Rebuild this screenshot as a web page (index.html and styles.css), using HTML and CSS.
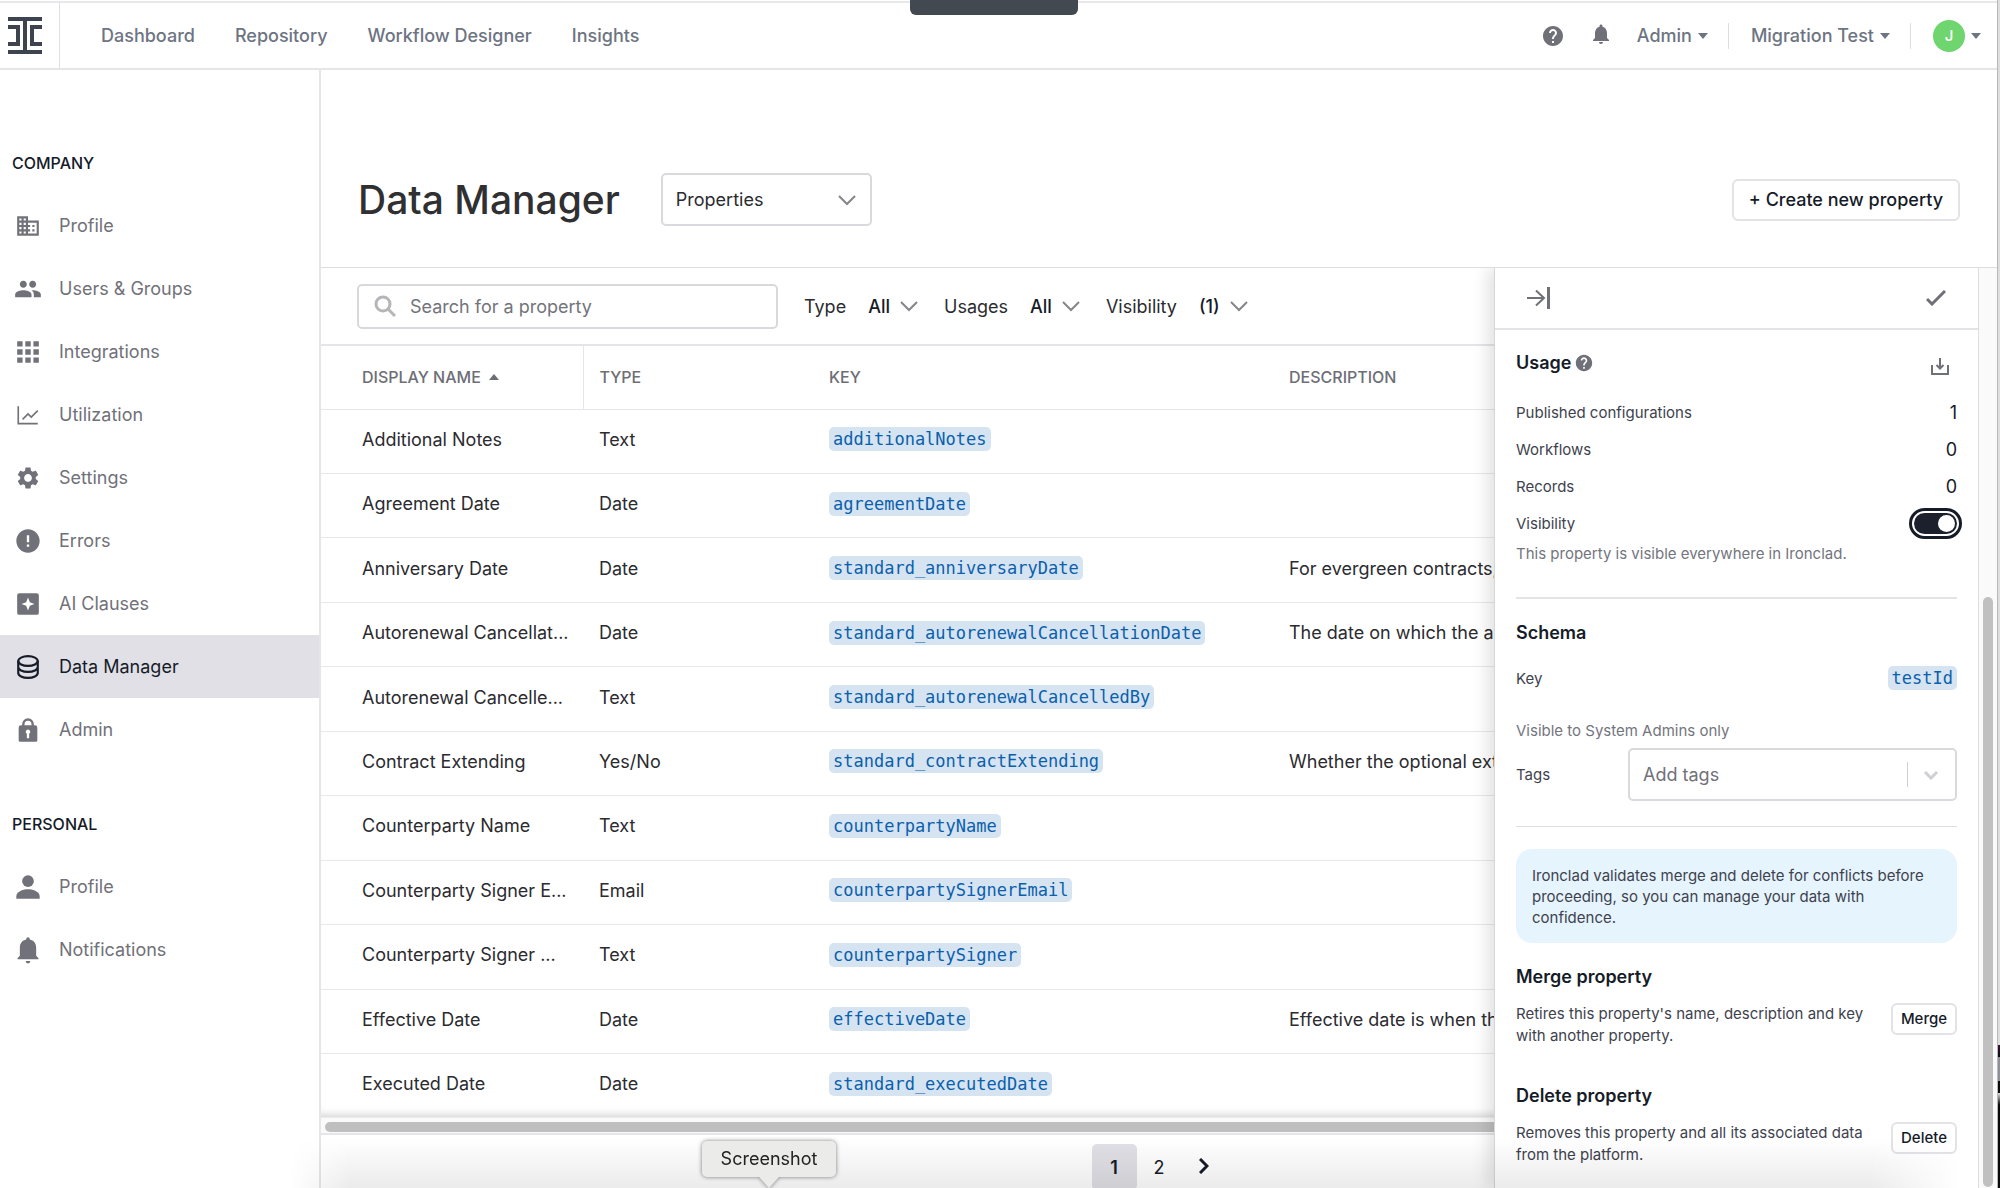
FILE: index.html
```html
<!DOCTYPE html>
<html lang="en">
  <head>
    <meta charset="UTF-8" />
    <meta name="viewport" content="width=device-width, initial-scale=1.0" />
    <title>Data Manager</title>

    <link rel="stylesheet" href="styles.css">
  </head>
  <body>
    <div class="notch"></div>

    <div class="window">
      <header class="topbar">
        <a class="logo" href="#" aria-label="Home">
          <svg width="34" height="38" viewBox="0 0 34 38" fill="#3d434f">
            <path d="M0 0h34v4H19v29h15v4H0v-4h15V4H0z" />
            <path d="M0 8h12v21H0v-4h8V12H0zM34 8H22v21h12v-4h-8V12h8z" />
          </svg>
        </a>
        <nav class="topnav">
          <a href="#">Dashboard</a>
          <a href="#">Repository</a>
          <a href="#">Workflow Designer</a>
          <a href="#">Insights</a>
        </nav>
        <div class="account">
          <button class="icon-btn" aria-label="Help">
            <svg width="24" height="24" viewBox="0 0 24 24"><path d="M12 2C6.480 2 2 6.480 2 12s4.480 10 10 10 10-4.480 10-10S17.520 2 12 2zm1 17h-2v-2h2v2zm2.070-7.750-.9.920C13.450 12.900 13 13.500 13 15h-2v-.5c0-1.100.45-2.100 1.170-2.830l1.240-1.260c.37-.36.59-.86.59-1.410 0-1.100-.9-2-2-2s-2 .9-2 2H8c0-2.210 1.790-4 4-4s4 1.790 4 4c0 .88-.36 1.680-.93 2.250z" /></svg>
          </button>
          <button class="icon-btn bell" aria-label="Notifications">
            <svg width="24" height="24" viewBox="0 0 24 24"><path d="M12 22c1.100 0 2-.9 2-2h-4c0 1.100.89 2 2 2zm6-6v-5c0-3.070-1.640-5.640-4.500-6.320V4c0-.83-.67-1.500-1.500-1.500s-1.500.67-1.500 1.500v.68C7.630 5.360 6 7.920 6 11v5l-2 2v1h16v-1l-2-2z" /></svg>
          </button>
          <button class="menu">Admin <i class="caret"></i></button>
          <button class="menu divided">Migration Test <i class="caret"></i></button>
          <button class="menu divided"><span class="avatar">J</span> <i class="caret"></i></button>
        </div>
      </header>

      <div class="body">
        <aside class="sidebar">
          <h2>Company</h2>
          <ul>
            <li><a href="#"><svg viewBox="0 0 24 24"><path d="M12 7V3H2v18h20V7H12zM6 19H4v-2h2v2zm0-4H4v-2h2v2zm0-4H4V9h2v2zm0-4H4V5h2v2zm4 12H8v-2h2v2zm0-4H8v-2h2v2zm0-4H8V9h2v2zm0-4H8V5h2v2zm10 12h-8v-2h2v-2h-2v-2h2v-2h-2V9h8v10zm-2-8h-2v2h2v-2zm0 4h-2v2h2v-2z" /></svg>Profile</a></li>
            <li><a href="#"><svg class="wide" viewBox="0 0 24 24"><path d="M16 11c1.660 0 2.990-1.340 2.990-3S17.660 5 16 5s-3 1.340-3 3 1.340 3 3 3zm-8 0c1.660 0 2.990-1.340 2.990-3S9.660 5 8 5 5 6.340 5 8s1.340 3 3 3zm0 2c-2.330 0-7 1.170-7 3.500V19h14v-2.500c0-2.330-4.670-3.500-7-3.500zm8 0c-.29 0-.62.02-.97.05 1.160.84 1.970 1.970 1.970 3.450V19h6v-2.500c0-2.330-4.670-3.500-7-3.500z" /></svg>Users &amp; Groups</a></li>
            <li><a href="#"><svg viewBox="0 0 24 24"><path d="M2 2h5v5H2zM9.500 2h5v5h-5zM17 2h5v5h-5zM2 9.500h5v5H2zM9.500 9.500h5v5h-5zM17 9.500h5v5h-5zM2 17h5v5H2zM9.500 17h5v5h-5zM17 17h5v5h-5z" /></svg>Integrations</a></li>
            <li><a href="#"><svg class="line" viewBox="0 0 24 24"><path d="M3 4v16h18M7 16l5-5 3 3 6-6" stroke-width="1.500" /></svg>Utilization</a></li>
            <li><a href="#"><svg viewBox="0 0 24 24"><path d="M19.140 12.940c.04-.3.06-.61.06-.94 0-.32-.02-.64-.07-.94l2.030-1.580c.18-.14.23-.41.12-.61l-1.920-3.320c-.12-.22-.37-.29-.59-.22l-2.390.96c-.5-.38-1.030-.7-1.620-.94l-.36-2.540c-.04-.24-.24-.41-.48-.41h-3.840c-.24 0-.43.17-.47.41l-.36 2.540c-.59.24-1.130.57-1.620.94l-2.390-.96c-.22-.08-.47 0-.59.22L2.740 8.870c-.12.21-.08.47.12.61l2.030 1.580c-.05.3-.09.63-.09.94s.02.64.07.94l-2.030 1.580c-.18.14-.23.41-.12.61l1.920 3.320c.12.22.37.29.59.22l2.390-.96c.5.38 1.030.7 1.620.94l.36 2.540c.05.24.24.41.48.41h3.840c.24 0 .44-.17.47-.41l.36-2.540c.59-.24 1.130-.56 1.620-.94l2.390.96c.22.08.47 0 .59-.22l1.920-3.320c.12-.22.07-.47-.12-.61l-2.010-1.580zM12 15.600c-1.980 0-3.600-1.620-3.600-3.600s1.620-3.600 3.600-3.600 3.600 1.620 3.600 3.600-1.620 3.600-3.600 3.600z" /></svg>Settings</a></li>
            <li><a href="#"><svg class="wide" viewBox="0 0 24 24"><path d="M12 2C6.480 2 2 6.480 2 12s4.480 10 10 10 10-4.480 10-10S17.520 2 12 2zm1 15h-2v-2h2v2zm0-4h-2V7h2v6z" /></svg>Errors</a></li>
            <li><a href="#"><svg viewBox="0 0 24 24"><path fill-rule="evenodd" d="M4 2h16a2 2 0 0 1 2 2v16a2 2 0 0 1-2 2H4a2 2 0 0 1-2-2V4a2 2 0 0 1 2-2zm8 4l-1.700 4.300L6 12l4.300 1.700L12 18l1.700-4.300L18 12l-4.300-1.700z" /></svg>AI Clauses</a></li>
            <li><a class="active" href="#"><svg class="line" viewBox="0 0 24 24"><g stroke-width="2"><ellipse cx="12" cy="6.500" rx="9" ry="4.500" /><path d="M3 6.500v11c0 2.500 4 4.500 9 4.500s9-2 9-4.500v-11M3 12c0 2.500 4 4.500 9 4.500s9-2 9-4.500" /></g></svg>Data Manager</a></li>
            <li><a href="#"><svg class="wide" viewBox="0 0 24 24"><path fill-rule="evenodd" d="M18 8h-1V7A5 5 0 0 0 7 7v1H6a2 2 0 0 0-2 2v11a1 1 0 0 0 1 1h14a1 1 0 0 0 1-1V10a2 2 0 0 0-2-2zM9 8V7a3 3 0 0 1 6 0v1zm3 3.500a2 2 0 0 1 1 3.700V19h-2v-3.800a2 2 0 0 1 1-3.700z" /></svg>Admin</a></li>
          </ul>
          <h2>Personal</h2>
          <ul>
            <li><a href="#"><svg class="wide" viewBox="0 0 24 24"><circle cx="12" cy="7" r="5" /><path d="M2 22v-2c0-3.700 5-6 10-6s10 2.300 10 6v2z" /></svg>Profile</a></li>
            <li><a href="#"><svg class="wide" viewBox="0 0 24 24"><path d="M12 23.500a2 2 0 0 0 2-2h-4a2 2 0 0 0 2 2zM19 17v-7c0-3.500-2-6.300-5.500-7V2.500a1.500 1.500 0 0 0-3 0V3C7 3.700 5 6.500 5 10v7l-2 2v1h18v-1z" /></svg>Notifications</a></li>
          </ul>
        </aside>

        <main class="main">
          <div class="page-head">
            <h1>Data Manager</h1>
            <div class="select view-select">
              <select aria-label="View">
                <option>Properties</option>
              </select>
              <svg width="18" height="12" viewBox="0 0 18 12"><path d="M1 2l8 8 8-8" /></svg>
            </div>
            <button class="btn create">+ Create new property</button>
          </div>

          <div class="workspace">
            <div class="filters">
              <div class="search">
                <svg width="22" height="22" viewBox="0 0 22 22"><circle cx="9" cy="9" r="7" /><path d="M14 14l7 7" /></svg>
                <input type="text" placeholder="Search for a property" aria-label="Search for a property" />
              </div>
              <div class="filter"><span>Type</span><button>All <svg width="18" height="12" viewBox="0 0 18 12"><path d="M1 2l8 8 8-8" /></svg></button></div>
              <div class="filter"><span>Usages</span><button>All <svg width="18" height="12" viewBox="0 0 18 12"><path d="M1 2l8 8 8-8" /></svg></button></div>
              <div class="filter"><span>Visibility</span><button>(1) <svg width="18" height="12" viewBox="0 0 18 12"><path d="M1 2l8 8 8-8" /></svg></button></div>
            </div>

            <div class="table-wrap">
              <table>
                <colgroup>
                  <col class="col-name" />
                  <col class="col-type" />
                  <col class="col-key" />
                  <col />
                </colgroup>
                <thead>
                  <tr><th>Display name <i class="caret up"></i></th><th>Type</th><th>Key</th><th>Description</th></tr>
                </thead>
                <tbody>
                  <tr><td>Additional Notes</td><td>Text</td><td><code>additionalNotes</code></td><td></td></tr>
                  <tr><td>Agreement Date</td><td>Date</td><td><code>agreementDate</code></td><td></td></tr>
                  <tr><td>Anniversary Date</td><td>Date</td><td><code>standard_anniversaryDate</code></td><td>For evergreen contracts,</td></tr>
                  <tr><td>Autorenewal Cancellat...</td><td>Date</td><td><code>standard_autorenewalCancellationDate</code></td><td>The date on which the au</td></tr>
                  <tr><td>Autorenewal Cancelle...</td><td>Text</td><td><code>standard_autorenewalCancelledBy</code></td><td></td></tr>
                  <tr><td>Contract Extending</td><td>Yes/No</td><td><code>standard_contractExtending</code></td><td>Whether the optional ext</td></tr>
                  <tr><td>Counterparty Name</td><td>Text</td><td><code>counterpartyName</code></td><td></td></tr>
                  <tr><td>Counterparty Signer E...</td><td>Email</td><td><code>counterpartySignerEmail</code></td><td></td></tr>
                  <tr><td>Counterparty Signer ...</td><td>Text</td><td><code>counterpartySigner</code></td><td></td></tr>
                  <tr><td>Effective Date</td><td>Date</td><td><code>effectiveDate</code></td><td>Effective date is when th</td></tr>
                  <tr><td>Executed Date</td><td>Date</td><td><code>standard_executedDate</code></td><td></td></tr>
                </tbody>
              </table>
            </div>
            <div class="hscroll"><div class="hscroll-thumb"></div></div>

            <nav class="pagination" aria-label="Pages">
              <button class="current">1</button>
              <button>2</button>
              <button aria-label="Next page"><svg width="10" height="16" viewBox="0 0 10 16"><path d="M1 1l7 7-7 7" /></svg></button>
            </nav>

            <section class="panel">
              <div class="panel-bar">
                <button class="icon-btn" aria-label="Close panel"><svg class="stroke" width="24" height="24" viewBox="0 0 24 24"><path d="M1 12h17M10 4.500l8 7.500-8 7.500" /><path d="M22.500 1v22" stroke-width="3" /></svg></button>
                <button class="icon-btn" aria-label="Save"><svg class="stroke" width="20" height="16" viewBox="0 0 20 16"><path d="M1 9l5 5L19 1" stroke-width="3" /></svg></button>
              </div>
              <div class="panel-body">
                <div class="row title">
                  <h3>Usage <svg width="18" height="18" viewBox="1 1 22 22"><path d="M12 2C6.480 2 2 6.480 2 12s4.480 10 10 10 10-4.480 10-10S17.520 2 12 2zm1 17h-2v-2h2v2zm2.070-7.750-.9.920C13.450 12.900 13 13.500 13 15h-2v-.5c0-1.100.45-2.100 1.170-2.830l1.240-1.260c.37-.36.59-.86.59-1.410 0-1.100-.9-2-2-2s-2 .9-2 2H8c0-2.210 1.790-4 4-4s4 1.790 4 4c0 .88-.36 1.680-.93 2.250z" /></svg></h3>
                  <button class="icon-btn download" aria-label="Download usage"><svg class="stroke" width="18" height="18" viewBox="0 0 18 18"><path d="M1 8v9h16V8M9 1v10M5.500 8L9 11.500 12.500 8" /></svg></button>
                </div>
                <div class="row"><span>Published configurations</span><b>1</b></div>
                <div class="row"><span>Workflows</span><b>0</b></div>
                <div class="row"><span>Records</span><b>0</b></div>
                <div class="row"><label for="visibility">Visibility</label><input class="toggle" id="visibility" type="checkbox" checked /></div>
                <p class="hint">This property is visible everywhere in Ironclad.</p>

                <div class="schema">
                  <h3>Schema</h3>
                  <div class="row key-row"><span>Key</span><code>testId</code></div>
                  <p class="hint">Visible to System Admins only</p>
                  <div class="row tags-row">
                    <label for="tags">Tags</label>
                    <div class="select tags">
                      <select id="tags">
                        <option>Add tags</option>
                      </select>
                      <svg width="16" height="10" viewBox="0 0 16 10"><path d="M2 2l6 6 6-6" /></svg>
                    </div>
                  </div>
                </div>

                <div class="danger">
                  <p class="info">Ironclad validates merge and delete for conflicts before proceeding, so you can manage your data with confidence.</p>
                  <h3>Merge property</h3>
                  <div class="action"><p>Retires this property's name, description and key with another property.</p><button class="btn small">Merge</button></div>
                  <h3>Delete property</h3>
                  <div class="action"><p>Removes this property and all its associated data from the platform.</p><button class="btn small">Delete</button></div>
                </div>
              </div>
            </section>
            <div class="vscroll"><div class="vscroll-thumb"></div></div>
          </div>
        </main>
      </div>
    </div>

    <div class="desktop-edge"></div>
    <div class="dock-shade"></div>
    <div class="dock-tip">Screenshot</div>
  </body>
</html>
```

FILE: styles.css
```css
* {
  margin: 0;
  padding: 0;
  box-sizing: border-box;
}

body {
  display: flex;
  height: 100vh;
  overflow: hidden;
  position: relative;
  background-color: #fff;
  color: #2b2b30;
  font-family: Inter, "Liberation Sans", sans-serif;
  font-size: 18px;
}

button,
input,
select {
  font: inherit;
  color: inherit;
  background: none;
  border: none;
}

a {
  color: inherit;
  text-decoration: none;
}

ul {
  list-style: none;
}

.window {
  flex: 1;
  min-width: 0;
  display: flex;
  flex-direction: column;
  border-top: 1px solid #fff;
}

.notch {
  position: absolute;
  z-index: 5;
  top: 0;
  left: calc(50% - 90px);
  width: 168px;
  height: 15px;
  border-radius: 0 0 6px 6px;
  background-color: #434951;
}

/* top bar */

.topbar {
  flex: none;
  display: flex;
  height: 69px;
  border-top: 2px solid #e8e8ea;
  border-bottom: 2px solid #e5e5e7;
  color: #6d7482;
  font-weight: 500;
}

.logo {
  display: flex;
  align-items: center;
  width: 60px;
  padding-left: 8px;
  border-right: 1px solid #dedee3;
}

.topnav {
  display: flex;
  align-items: center;
  gap: 40px;
  padding-left: 41px;
}

.account {
  display: flex;
  align-items: center;
  margin-left: auto;
  padding-right: 16px;
}

.icon-btn {
  display: flex;
  fill: #6f7078;
}

.bell {
  margin: 0 24px 4px;
}

.menu {
  display: flex;
  align-items: center;
  gap: 6px;
  height: 26px;
}

.divided {
  margin-left: 20px;
  padding-left: 22px;
  border-left: 1px solid #dcdce2;
}

.caret {
  border: 5px solid transparent;
  border-top: 6px solid #6d7482;
  border-bottom: none;
}

.caret.up {
  display: inline-block;
  margin: 0 0 3px 4px;
  border-top: none;
  border-bottom: 6px solid #6d6e76;
}

.avatar {
  width: 32px;
  height: 32px;
  border-radius: 50%;
  background-color: #6fd66f;
  color: #fff;
  font-size: 15px;
  line-height: 32px;
}

/* sidebar */

.body {
  flex: 1;
  min-height: 0;
  display: flex;
}

.sidebar {
  flex: none;
  width: 321px;
  padding-top: 80px;
  border-right: 2px solid #e6e6ea;
  color: #717179;
}

.sidebar h2 {
  padding-left: 12px;
  color: #161b28;
  font-size: 16px;
  font-weight: 500;
  line-height: 26px;
  text-transform: uppercase;
}

.sidebar ul {
  padding: 18px 0 50px;
}

.sidebar a {
  display: flex;
  align-items: center;
  height: 63px;
}

.sidebar svg {
  width: 26px;
  height: 26px;
  margin: 0 18px 0 15px;
  fill: #717179;
}

.sidebar svg.wide {
  width: 28px;
  height: 28px;
  margin: 0 17px 0 14px;
}

.sidebar svg.line {
  fill: none;
  stroke: #717179;
}

.sidebar .active {
  background-color: #e1e0e6;
  color: #161b28;
}

.sidebar .active svg {
  stroke: #161b28;
}

/* page header */

.main {
  flex: 1;
  min-width: 0;
  display: flex;
  flex-direction: column;
}

.page-head {
  display: flex;
  align-items: center;
  height: 197px;
  padding: 62px 37px 0;
}

h1 {
  color: #303032;
  font-size: 39px;
  font-weight: 500;
}

.select {
  position: relative;
  border: 2px solid #dadade;
  border-radius: 5px;
}

.select select {
  appearance: none;
  width: 100%;
  height: 100%;
  padding: 0 13px;
}

.select svg {
  position: absolute;
  right: 14px;
  top: calc(50% - 6px);
  pointer-events: none;
}

.select path,
.filter path {
  fill: none;
  stroke: #85858c;
  stroke-width: 2;
}

.view-select {
  width: 211px;
  height: 53px;
  margin-left: 41px;
}

.btn {
  border: 2px solid #e2e2e7;
  border-radius: 6px;
  background-color: #fff;
  color: #161b28;
  font-weight: 500;
}

.create {
  height: 42px;
  margin-left: auto;
  padding: 0 15px;
}

/* filters */

.workspace {
  flex: 1;
  min-height: 0;
  display: flex;
  flex-direction: column;
  position: relative;
  border-top: 1px solid #dddde0;
}

.filters {
  display: flex;
  align-items: center;
  gap: 26px;
  height: 78px;
  padding-left: 36px;
  border-bottom: 2px solid #e5e5e9;
}

.search {
  display: flex;
  align-items: center;
  gap: 14px;
  width: 421px;
  height: 45px;
  padding: 0 15px;
  border: 2px solid #d9d9dd;
  border-radius: 5px;
}

.search svg {
  fill: none;
  stroke: #b5b5ba;
  stroke-width: 3;
}

.search input {
  flex: 1;
}

.search input::placeholder {
  color: #73737b;
  opacity: 1;
}

.filter,
.filter button {
  display: flex;
  align-items: center;
}

.filter {
  gap: 22px;
}

.filter button {
  gap: 10px;
  color: #161b28;
  font-weight: 500;
}

/* table */

.table-wrap {
  flex: 1;
  min-height: 0;
  overflow: hidden;
  box-shadow: inset 0 -8px 8px -6px #d0d0d0;
}

table {
  width: 100%;
  height: 100%;
  table-layout: fixed;
  border-collapse: collapse;
}

.col-name {
  width: 262px;
}

.col-type {
  width: 230px;
}

.col-key {
  width: 460px;
}

th {
  height: 63px;
  padding-left: 16px;
  border-bottom: 1px solid #e6e6ea;
  color: #6d6e76;
  font-size: 16px;
  font-weight: 500;
  text-align: left;
  text-transform: uppercase;
}

th:first-child {
  border-right: 1px solid #e6e6ea;
}

th:first-child,
td:first-child {
  padding-left: 41px;
}

td {
  padding: 0 0 4px 16px;
  border-bottom: 1px solid #e8e8ec;
  overflow: hidden;
  white-space: nowrap;
}

tr:last-child td {
  border-bottom: none;
}

code {
  display: inline-block;
  padding: 0 4px;
  border-radius: 5px;
  background-color: #d6e4f2;
  color: #0a60ac;
  font-family: "DejaVu Sans Mono", monospace;
  font-size: 17px;
  line-height: 24px;
}

.hscroll {
  height: 18px;
  padding: 4px 0 0 4px;
  border-top: 1px solid #ececec;
  border-bottom: 2px solid #e6e6ea;
  background-color: #fafafa;
}

.hscroll-thumb {
  height: 10px;
  border-radius: 5px 0 0 5px;
  background-color: #bfbfbf;
}

.pagination {
  display: flex;
  justify-content: center;
  height: 53px;
  padding-top: 9px;
}

.pagination button {
  width: 45px;
  height: 46px;
  color: #161b28;
}

.pagination .current {
  border-radius: 5px;
  background-color: #e1e0e6;
  font-weight: 600;
}

.pagination path {
  fill: none;
  stroke: #161b28;
  stroke-width: 3;
}

/* property panel */

.panel {
  position: absolute;
  top: 0;
  right: 18px;
  bottom: 0;
  width: 485px;
  border-left: 1px solid #d6d6d9;
  border-right: 1px solid #dedee1;
  background-color: #fff;
  box-shadow: -6px 0 16px rgba(0, 0, 0, 0.12);
  clip-path: inset(0 0 0 -24px);
  color: #3e424d;
  font-size: 15px;
}

.panel-bar {
  display: flex;
  align-items: center;
  justify-content: space-between;
  height: 62px;
  padding: 0 32px 0 31px;
  border-bottom: 2px solid #e3e3e6;
}

.stroke {
  fill: none;
  stroke: #6f7078;
  stroke-width: 2;
}

.panel-body {
  padding: 14px 21px 0;
}

.row {
  display: flex;
  align-items: center;
  justify-content: space-between;
  height: 37px;
}

.row.title {
  height: 50px;
}

.row b {
  color: #161b28;
  font-size: 18px;
  font-weight: 400;
}

.panel h3 {
  color: #161b28;
  font-size: 18px;
  font-weight: 600;
  line-height: 24px;
}

.row h3 {
  display: flex;
  align-items: center;
  gap: 4px;
  padding-bottom: 12px;
  fill: #6f7078;
}

.download {
  margin: 0 8px 6px 0;
}

.toggle {
  appearance: none;
  display: flex;
  justify-content: flex-end;
  align-items: center;
  width: 43px;
  height: 21px;
  padding: 2px;
  border-radius: 11px;
  background-color: #1c202d;
  outline: 3px solid #161b28;
  outline-offset: 2px;
}

.toggle::before {
  content: "";
  width: 17px;
  height: 17px;
  border-radius: 50%;
  background-color: #fff;
}

.hint {
  color: #73757e;
  line-height: 24px;
}

.schema {
  margin-top: 31px;
  padding: 22px 0 25px;
  border-top: 2px solid #e3e3e8;
}

.key-row {
  height: 66px;
}

.schema .hint {
  padding-top: 8px;
}

.tags-row {
  height: 53px;
  margin-top: 5px;
}

.tags {
  width: 329px;
  height: 53px;
  color: #717179;
  font-size: 18px;
}

.tags svg {
  right: 16px;
  top: calc(50% - 5px);
}

.tags path {
  stroke: #cfcfd5;
  stroke-width: 3;
}

.tags::after {
  content: "";
  position: absolute;
  top: 12px;
  right: 47px;
  bottom: 12px;
  border-left: 1px solid #cfcfd5;
}

.danger {
  padding-top: 22px;
  border-top: 1px solid #dddde2;
}

.info {
  margin-bottom: 22px;
  padding: 16px 16px 15px;
  border-radius: 16px;
  background-color: #e6f4fe;
  line-height: 21px;
}

.action {
  display: flex;
  align-items: flex-start;
  justify-content: space-between;
  gap: 8px;
  padding: 14px 0 37px;
  line-height: 22px;
}

.small {
  height: 32px;
  padding: 0 8px;
  line-height: 20px;
}

.vscroll {
  position: absolute;
  top: 0;
  right: 0;
  bottom: 0;
  width: 18px;
  padding: 329px 4px 1px;
  background-color: #fafafa;
}

.vscroll-thumb {
  height: 100%;
  border-radius: 5px;
  background-color: #c0c0c0;
}

/* desktop around the window */

.desktop-edge {
  flex: none;
  width: 3px;
  border-left: 1px solid #b8b8b8;
  background-image: linear-gradient(#dedede 88%, #331133 88%, #0a0a0a 89%, #8d9098 89%, #8d9098 91%, #0a0a0a 91%, #0a0a0a 92%, #e0e0e0 92%, #0a0a0a 93%);
}

.dock-shade {
  position: absolute;
  left: 290px;
  right: 40px;
  bottom: 0;
  height: 50px;
  background-image: linear-gradient(transparent, rgba(0, 0, 0, 0.08));
  mask-image: linear-gradient(90deg, transparent, #000 60px, #000 calc(100% - 90px), transparent);
  pointer-events: none;
}

.dock-tip {
  position: absolute;
  left: 702px;
  bottom: 11px;
  width: 134px;
  border-radius: 5px;
  background-color: #ebebea;
  filter: drop-shadow(0 0 2px rgba(0, 0, 0, 0.5));
  color: #222;
  line-height: 36px;
  text-align: center;
}

.dock-tip::after {
  content: "";
  position: absolute;
  top: 36px;
  left: 57px;
  border: 10px solid transparent;
  border-top: 11px solid #ebebea;
  border-bottom: none;
}
```
